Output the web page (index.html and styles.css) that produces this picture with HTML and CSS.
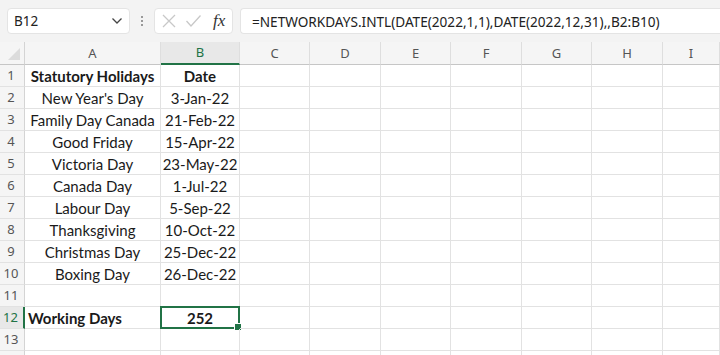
FILE: index.html
```html
<!DOCTYPE html>
<html lang="en">
<head>
    <meta charset="UTF-8">
    <title>NETWORKDAYS.INTL</title>
    <link rel="stylesheet" href="styles.css">
</head>
<body>
    <div class="formula-bar">
        <div class="name-box">
            <span>B12</span>
            <svg class="chevron" width="12" height="8" viewBox="0 0 12 8"><path d="M1.5 1.5 L6 6 L10.5 1.5" fill="none" stroke="#444" stroke-width="1.3"/></svg>
        </div>
        <div class="grip">
            <i></i><i></i><i></i>
        </div>
        <div class="fx-box">
            <svg width="16" height="16" viewBox="0 0 16 16"><path d="M2 2 L14 14 M14 2 L2 14" stroke="#c8c8c8" stroke-width="1.3"/></svg>
            <svg width="17" height="16" viewBox="0 0 17 16"><path d="M1.5 8 L6 13 L15.5 2.5" fill="none" stroke="#c8c8c8" stroke-width="1.3"/></svg>
            <span class="fx">fx</span>
        </div>
        <div class="formula">=NETWORKDAYS.INTL(DATE(2022,1,1),DATE(2022,12,31),,B2:B10)</div>
    </div>

    <div class="sheet">
        <div class="corner"><span></span></div>
        <div class="col-head">A</div>
        <div class="col-head active">B</div>
        <div class="col-head">C</div>
        <div class="col-head">D</div>
        <div class="col-head">E</div>
        <div class="col-head">F</div>
        <div class="col-head">G</div>
        <div class="col-head">H</div>
        <div class="col-head">I</div>
    </div>
    <div class="sheet" id="rows"></div>

    <script>
        const data = [
            ['Statutory Holidays', 'Date', 'bold'],
            ['New Year\'s Day', '3-Jan-22'],
            ['Family Day Canada', '21-Feb-22'],
            ['Good Friday', '15-Apr-22'],
            ['Victoria Day', '23-May-22'],
            ['Canada Day', '1-Jul-22'],
            ['Labour Day', '5-Sep-22'],
            ['Thanksgiving', '10-Oct-22'],
            ['Christmas Day', '25-Dec-22'],
            ['Boxing Day', '26-Dec-22'],
            ['', ''],
            ['Working Days', '252', 'total'],
            ['', ''],
            ['', '']
        ];
        const rows = document.getElementById('rows');
        data.forEach((r, i) => {
            const n = i + 1;
            // last row only peeks in at the bottom edge, so no number
            const label = n < data.length ? n : '';
            let html = `<div class="row-head${n === 12 ? ' active' : ''}">${label}</div>`;
            html += `<div class="cell ${r[2] || ''}">${r[0]}</div>`;
            html += `<div class="cell center ${r[2] || ''}">${r[1]}${n === 12 ? '<span class="handle"></span>' : ''}</div>`;
            for (let c = 0; c < 7; c++) html += '<div class="cell"></div>';
            rows.insertAdjacentHTML('beforeend', html);
        });
    </script>
</body>
</html>
```

FILE: styles.css
```css
body {
    margin: 0;
    width: 720px;
    height: 355px;
    overflow: hidden;
    background: #fff;
    font-family: Lato, "Open Sans", sans-serif;
}

.formula-bar {
    display: flex;
    align-items: center;
    height: 42px;
    padding-left: 7px;
    background-color: #f3f3f3;
    box-sizing: border-box;
}

.name-box, .fx-box, .formula {
    height: 26px;
    background: #fff;
    border: 1px solid #e4e4e4;
    border-radius: 4px;
    box-sizing: border-box;
    display: flex;
    align-items: center;
}

.name-box {
    width: 123px;
    padding: 0 6px 0 6px;
    justify-content: space-between;
    font-family: "Noto Sans", sans-serif;
    font-size: 13.5px;
    color: #222;
}

.grip {
    width: 24px;
    display: flex;
    flex-direction: column;
    align-items: center;
    gap: 2px;
}

.grip i {
    width: 2px;
    height: 2px;
    background: #999;
}

.fx-box {
    width: 79px;
    padding: 0 5px 0 6px;
    gap: 8px;
}

.fx {
    font-family: "Liberation Serif", serif;
    font-style: italic;
    font-size: 17px;
    color: #333;
    margin-left: 3px;
}

.formula {
    flex: 1;
    margin-left: 7px;
    border-right: none;
    border-radius: 4px 0 0 4px;
    padding-left: 11px;
    font-family: "Noto Sans", sans-serif;
    font-size: 13.6px;
    color: #222;
    white-space: nowrap;
}

.sheet {
    display: grid;
    grid-template-columns: 25px 136px 79px 70px 71px 70px 71px 70px 71px 57px;
}

.corner, .col-head {
    height: 23px;
    box-sizing: border-box;
    background: #f5f5f5;
    border-bottom: 1px solid #c6c6c6;
}

.corner {
    position: relative;
    border-right: 1px solid #d4d4d4;
}

.corner span {
    position: absolute;
    right: 4px;
    bottom: 4px;
    width: 0;
    height: 0;
    border-left: 12px solid transparent;
    border-bottom: 12px solid #dcdcdc;
}

.col-head {
    border-right: 1px solid #dedede;
    text-align: center;
    font-family: "Noto Sans", sans-serif;
    font-size: 13px;
    line-height: 22px;
    color: #555;
}

.col-head.active {
    color: #217346;
    background: #e8e8e8;
    border-bottom: 2px solid #217346;
    line-height: 21px;
}

.row-head {
    height: 22px;
    box-sizing: border-box;
    background: #f5f5f5;
    border-right: 1px solid #d4d4d4;
    border-bottom: 1px solid #e2e2e2;
    text-align: center;
    font-family: "Noto Sans", sans-serif;
    font-size: 13px;
    line-height: 21px;
    color: #555;
    padding-right: 2px;
}

.row-head.active {
    color: #217346;
    background: #e8e8e8;
    border-right: 2px solid #217346;
}

.cell {
    height: 22px;
    box-sizing: border-box;
    border-right: 1px solid #e2e2e2;
    border-bottom: 1px solid #e2e2e2;
    font-size: 15px;
    line-height: 22px;
    color: #1a1a1a;
    text-align: center;
    white-space: nowrap;
    position: relative;
}

.cell.bold {
    font-weight: bold;
}

.cell.total {
    font-weight: bold;
    text-align: left;
    padding-left: 3px;
}

.cell.center.total {
    text-align: center;
    padding-left: 0;
    border: 2px solid #217346;
    margin: -1px 0 0 -1px;
    height: 23px;
    width: 80px;
    line-height: 20px;
}

.handle {
    position: absolute;
    right: -4px;
    bottom: -4px;
    width: 6px;
    height: 6px;
    background: #217346;
    border: 1px solid #fff;
}
```
